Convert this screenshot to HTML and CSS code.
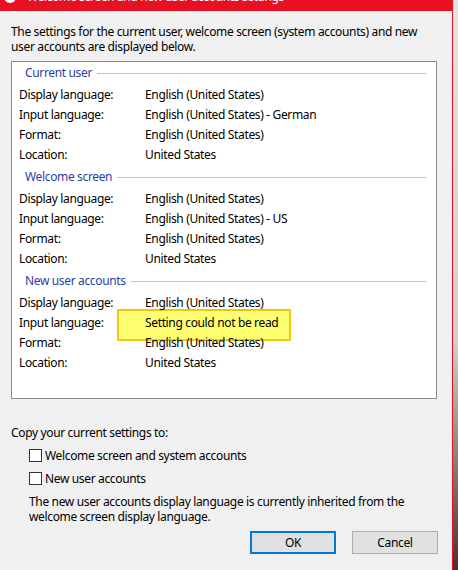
FILE: index.html
```html
<!DOCTYPE html>
<html lang="en">
<head>
<meta charset="utf-8">
<title>Welcome screen and new user accounts settings</title>
<link rel="stylesheet" href="styles.css">
</head>
<body>
<div class="screen">
  <div class="window">
    <div class="titlebar">
      <span class="app-icon"></span>
      <span class="title">Welcome screen and new user accounts settings</span>
      <span class="close">✕</span>
    </div>
    <div class="content">
      <p class="intro">The settings for the current user, welcome screen (system accounts) and new user accounts are displayed below.</p>
      <div class="groupbox">
        <section class="group">
          <div class="group-head"><span class="group-title">Current user</span><span class="rule"></span></div>
          <div class="rows">
            <span>Display language:</span><span>English (United States)</span>
            <span>Input language:</span><span>English (United States) - German</span>
            <span>Format:</span><span>English (United States)</span>
            <span>Location:</span><span>United States</span>
          </div>
        </section>
        <section class="group">
          <div class="group-head"><span class="group-title">Welcome screen</span><span class="rule"></span></div>
          <div class="rows">
            <span>Display language:</span><span>English (United States)</span>
            <span>Input language:</span><span>English (United States) - US</span>
            <span>Format:</span><span>English (United States)</span>
            <span>Location:</span><span>United States</span>
          </div>
        </section>
        <section class="group">
          <div class="group-head"><span class="group-title">New user accounts</span><span class="rule"></span></div>
          <div class="rows">
            <span>Display language:</span><span>English (United States)</span>
            <span>Input language:</span><span class="highlight">Setting could not be read</span>
            <span>Format:</span><span>English (United States)</span>
            <span>Location:</span><span>United States</span>
          </div>
        </section>
      </div>
      <p class="copy">Copy your current settings to:</p>
      <div class="check"><span class="box"></span><span>Welcome screen and system accounts</span></div>
      <div class="check second"><span class="box"></span><span>New user accounts</span></div>
      <p class="note">The new user accounts display language is currently inherited from the welcome screen display language.</p>
      <div class="buttons">
        <button class="btn primary">OK</button>
        <button class="btn">Cancel</button>
      </div>
    </div>
  </div>
  <div class="desk"></div>
</div>
</body>
</html>
```
FILE: styles.css
```css
* { box-sizing: border-box; }
html, body { margin: 0; padding: 0; }
body {
  width: 458px;
  height: 570px;
  overflow: hidden;
  font-family: "Noto Sans", "Open Sans", sans-serif;
  font-size: 12px;
  letter-spacing: -0.35px;
  color: #000;
  background: #f0f0f0;
}
.screen { display: flex; height: 570px; }
.window {
  width: 453px;
  height: 570px;
  background: #f0f0f0;
  border-right: 1px solid #e81123;
  display: flex;
  flex-direction: column;
}
.desk {
  flex: 1;
  background: linear-gradient(#e4e4e4, #d0d0d0 60%, #4a3030 100%);
}
.titlebar {
  height: 11px;
  flex: none;
  background: #e81123;
  overflow: hidden;
  display: flex;
  align-items: flex-start;
  color: #fff;
}
.app-icon {
  width: 12px;
  height: 12px;
  border-radius: 50%;
  background: #fff;
  margin: -9px 0 0 4px;
  flex: none;
}
.title {
  line-height: 16px;
  margin: -11px 0 0 11px;
  white-space: nowrap;
  flex: 1;
}
.close {
  line-height: 16px;
  font-size: 11px;
  margin: -11px 14px 0 0;
}
.content {
  flex: 1;
  padding: 13px 15px 0 11px;
}
.intro {
  margin: 0;
  line-height: 15px;
}
.groupbox {
  margin-top: 7px;
  height: 338px;
  background: #fff;
  border: 1px solid #8a8a8a;
  padding: 3px 10px 0 7px;
}
.group + .group { margin-top: 4px; }
.group-head {
  display: flex;
  align-items: center;
  height: 16px;
  line-height: 16px;
  margin-bottom: 4px;
  padding-left: 6px;
}
.group-title { color: #2b3ea6; }
.rule {
  flex: 1;
  height: 1px;
  background: #b5c2de;
  margin-left: 5px;
}
.rows {
  display: grid;
  grid-template-columns: 126px 1fr;
  line-height: 20px;
}
.rows > span {
  position: relative;
  z-index: 1;
}
.rows > .highlight { z-index: 0; }
.highlight::before {
  content: "";
  position: absolute;
  left: -28px;
  top: -4px;
  width: 170px;
  height: 28px;
  background: #ffff72;
  border: 2px solid #f2c513;
  z-index: -1;
}
.copy {
  margin: 26px 0 0;
  line-height: 15px;
}
.check {
  display: flex;
  align-items: center;
  margin: 8px 0 0 18px;
  line-height: 15px;
}
.check.second { margin-top: 8px; }
.box {
  width: 13px;
  height: 13px;
  border: 1px solid #333;
  background: #fff;
  margin-right: 3px;
  flex: none;
}
.note {
  margin: 8px 0 0 18px;
  line-height: 15px;
}
.buttons {
  display: flex;
  justify-content: flex-end;
  gap: 16px;
  margin: 7px -1px 0 0;
}
.btn {
  width: 86px;
  height: 23px;
  font: inherit;
  letter-spacing: inherit;
  color: #000;
  background: #e1e1e1;
  border: 1px solid #adadad;
  padding: 0;
}
.btn.primary { border: 2px solid #0078d7; }
```
